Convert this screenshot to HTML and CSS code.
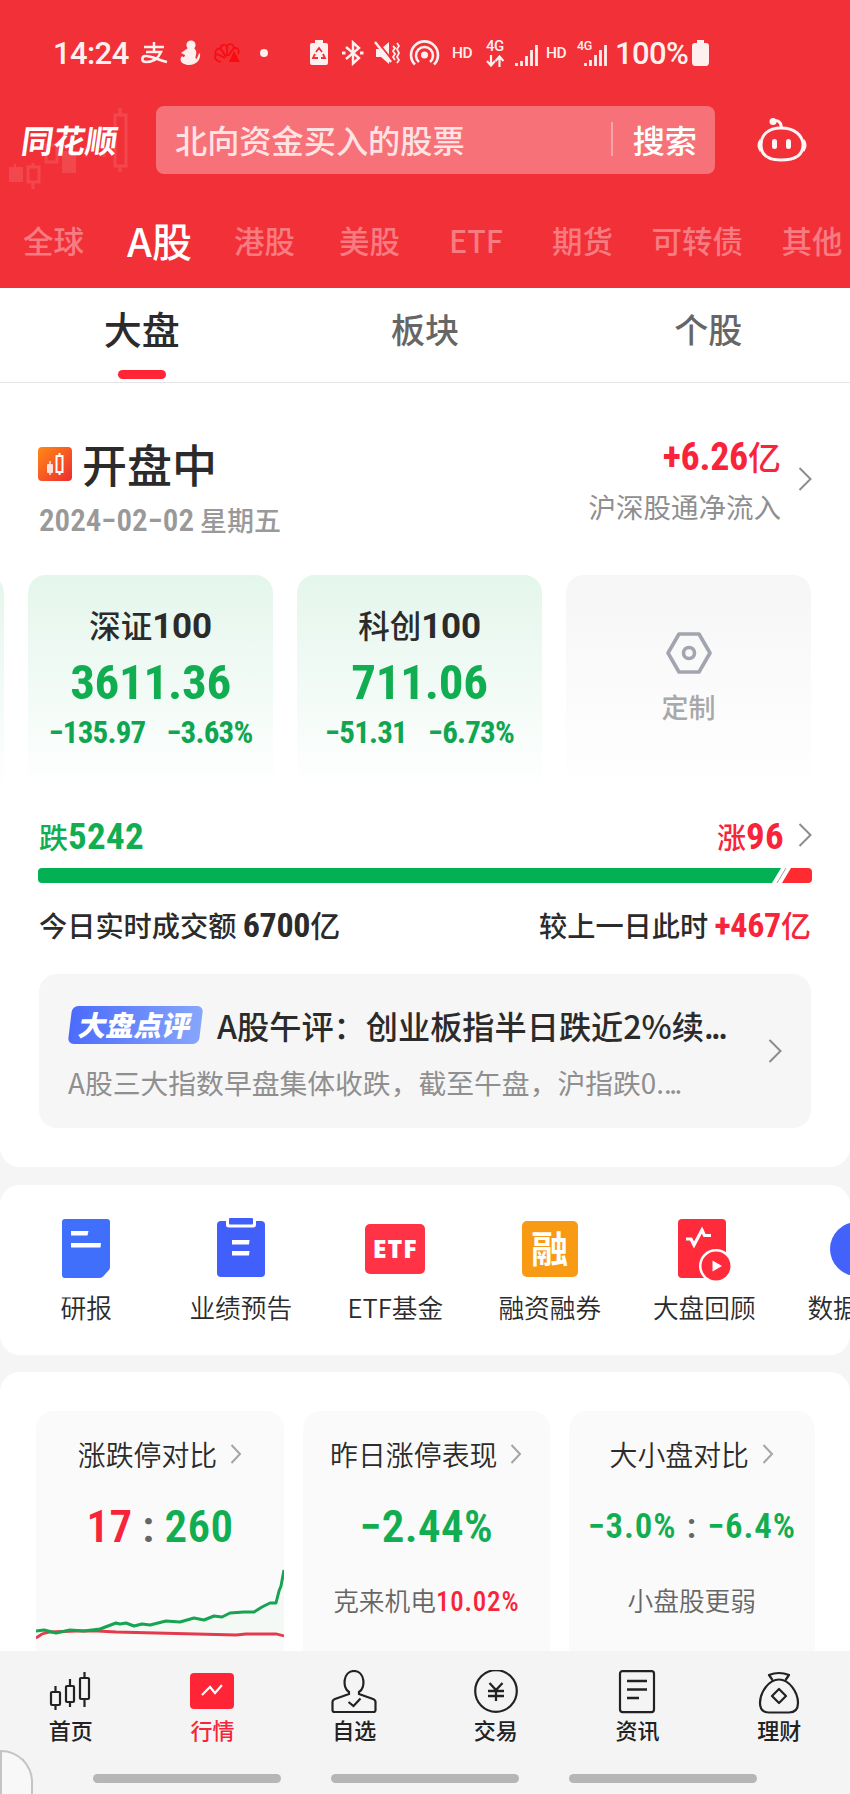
FILE: index.html
```html
<!DOCTYPE html>
<html lang="zh-CN">
<head>
    <meta charset="UTF-8">
    <meta name="viewport" content="width=device-width, initial-scale=1.0">
    <title>同花顺 - A股行情</title>
    <link rel="stylesheet" href="styles.css">
</head>
<body>

    <header class="header">
        <!-- Phone status bar -->
        <div class="status-bar">
            <span class="time">14:24</span>
            <svg class="pay" width="29" height="24" viewBox="0 0 29 24"><path d="M4 6 H24 M14 1 V11 M6 11 H21 C18 18 12 21 6 21 C1 21 1 15 6 15 C12 15 18 19 27 21" fill="none" stroke="#fff0f0" stroke-width="2.500"/></svg>
            <svg class="s-person" width="22" height="26" viewBox="0 0 22 26"><circle cx="12" cy="5" r="4.6" fill="#fff0f0"/><path d="M9 8 L15 8 C20 13 15 16 17 19 C19 19 18 15 21 13 C22 20 17 25 10 25 C4 25 -1 21 3 16 C4 18 6 17 6 15 L2 13 Z" fill="#fff0f0"/></svg>
            <svg class="s-shell" width="28" height="24" viewBox="0 0 28 24"><g fill="none" stroke="#fb0a10" stroke-width="1.600"><path d="M8 21 C2 20 1 16 3 14 C1 9 5 7 7 8 C8 3 12 3 14 5 C17 1 21 4 21 7 C25 6 27 10 25 13"/><path d="M12 17 L4 13 M13 16 L8 8 M14 15 L14 5 M15 15 L21 7"/></g><path d="M21 10 L27 21 L16 21 Z" fill="#fb0a10"/></svg>
            <span class="dot"></span>
            <svg class="s-saver" width="20" height="26" viewBox="0 0 20 26"><path d="M6 0 H14 V3 H17 Q19 3 19 5 V23 Q19 25 17 25 H3 Q1 25 1 23 V5 Q1 3 3 3 H6 Z" fill="#fff0f0"/><path d="M7 12 L10 8 L13 12 M14 14 L16 18 H12 M9 18 H4 L6 14" fill="none" stroke="#f13037" stroke-width="1.8"/></svg>
            <svg class="s-bt" width="24" height="26" viewBox="0 0 24 26"><path d="M5 7 L18 18 L12 23.5 V2.500 L18 8 L5 19" fill="none" stroke="#fff0f0" stroke-width="2.400"/><path d="M1 13 h3.500 M19 13 h3.500" stroke="#fff0f0" stroke-width="3"/></svg>
            <svg class="s-mute" width="26" height="26" viewBox="0 0 26 26"><path d="M2 9 H7 L15 2 V24 L7 17 H2 Z" fill="#fff0f0"/><path d="M3 1 L18 20" stroke="#f13037" stroke-width="2"/><path d="M1 2 L17 22" stroke="#fff0f0" stroke-width="2.400"/><path d="M19 6 l2 2 l-2 3 l2 3 l-2 3 l2 3 M23 3 l2 3 l-2 3 l2 4 l-2 4 l2 3 l-2 3" fill="none" stroke="#fff0f0" stroke-width="1.800"/></svg>
            <svg class="s-spot" width="31" height="26" viewBox="0 0 31 26"><circle cx="15.500" cy="15" r="3.500" fill="#fff0f0"/><path d="M10 22 A8.500 8.500 0 1 1 21 22 M6 24.500 A13.500 13.500 0 1 1 25 24.500" fill="none" stroke="#fff0f0" stroke-width="2.600"/></svg>
            <span class="hd hd-1">HD</span>
            <span class="net">
                <span>4G</span>
                <svg width="18" height="12" viewBox="0 0 18 12"><path d="M5 0 V10 M1 6 L5 10.500 L9 6 M13.500 12 V2 M9.500 6 L13.500 1.500 L17.500 6" fill="none" stroke="#fff0f0" stroke-width="2.200"/></svg>
            </span>
            <svg class="s-signal" width="23" height="23" viewBox="0 0 23 23"><path d="M1.500 19 V22 M6.500 17 V22 M11.500 12 V22 M16.500 6 V22 M21.500 1 V22" stroke="#fff0f0" stroke-width="2.800"/></svg>
            <span class="hd hd-2">HD</span>
            <span class="net-small">4G</span>
            <svg class="s-signal-2" width="23" height="23" viewBox="0 0 23 23"><path d="M1.500 19 V22 M6.500 16 V22 M11.500 11 V22 M16.500 6 V22 M21.500 1 V22" stroke="#fff0f0" stroke-width="2.800"/></svg>
            <span class="percent">100%</span>
            <svg class="s-battery" width="17" height="26" viewBox="0 0 17 26"><path d="M5 0 H12 V3 H14 Q17 3 17 6 V22 Q17 26 14 26 H3 Q0 26 0 22 V6 Q0 3 3 3 H5 Z" fill="#fff0f0"/></svg>
        </div>

        <!-- Logo, search box, assistant -->
        <div class="top-row">
            <div class="logo">
                <svg class="logo-bg" width="130" height="104" viewBox="0 0 130 104"><g fill="#f3474e"><rect x="9" y="82" width="14" height="15"/><rect x="62" y="66" width="14" height="22"/><path d="M15 79 v6" stroke="#f3474e" stroke-width="2"/></g><g fill="none" stroke="#f3474e" stroke-width="3"><rect x="28" y="82" width="11" height="15"/><path d="M33 78 v4 M33 97 v7"/><rect x="46" y="60" width="11" height="17"/><rect x="115" y="30" width="11" height="51"/><path d="M120 23 v7 M120 81 v6 M104 62 v10 M86 62 v10"/></g></svg>
                <span>同花顺</span>
            </div>
            <div class="search">
                <span class="search-text">北向资金买入的股票</span>
                <span class="search-btn">搜索</span>
            </div>
            <svg class="robot" width="50" height="46" viewBox="0 0 50 46"><g fill="none" stroke="#fff5f5" stroke-width="3"><path d="M24 11 C11 11 4 18 4 28 C4 38 10 43 24 43 C39 43 46 38 46 28 C46 18 37 11 24 11 Z"/><path d="M24 11 C25 5 20 2 16 5"/><path d="M4 23 Q0 28 4 34 M46 23 Q50 28 46 34"/></g><circle cx="16" cy="4.500" r="3.500" fill="#fff5f5"/><rect x="15" y="22" width="5" height="10" rx="2.500" fill="#fff5f5"/><rect x="29" y="22" width="5" height="10" rx="2.500" fill="#fff5f5"/></svg>
        </div>

        <nav class="market-tabs">
            <span>全球</span>
            <span class="active">A股</span>
            <span>港股</span>
            <span>美股</span>
            <span class="etf">ETF</span>
            <span>期货</span>
            <span>可转债</span>
            <span>其他</span>
        </nav>
    </header>

    <nav class="sub-tabs">
        <span class="active">大盘</span>
        <span>板块</span>
        <span>个股</span>
    </nav>

    <!-- Market overview -->
    <section class="overview">
        <div class="session">
            <div class="session-left">
                <h1>
                    <svg width="34" height="34" viewBox="0 0 34 34"><defs><linearGradient id="og" x1="0" y1="0" x2="1" y2="1"><stop offset="0" stop-color="#ff8a14"/><stop offset="1" stop-color="#ee2a33"/></linearGradient></defs><rect width="34" height="34" rx="4" fill="url(#og)"/><path d="M12 14 v14" stroke="#ffe3d8" stroke-width="1.500"/><rect x="9" y="17" width="6" height="9" rx="1" fill="#ffe3d8"/><rect x="18.500" y="9" width="6" height="16" fill="none" stroke="#fff" stroke-width="2"/><path d="M21.500 6 v3 M21.500 25 v3" stroke="#fff" stroke-width="2"/></svg>
                    开盘中
                </h1>
                <p class="date"><span class="num">2024−02−02</span> 星期五</p>
            </div>
            <div class="session-right">
                <p class="inflow"><span class="num">+6.26</span>亿</p>
                <p class="inflow-label">沪深股通净流入</p>
            </div>
            <svg class="arrow" width="14" height="24" viewBox="0 0 14 24"><path d="M1.500 1 L12.500 12 L1.500 23"/></svg>
        </div>

        <div class="indexes">
            <div class="index-card"></div>
            <div class="index-card">
                <h2>深证<b class="num">100</b></h2>
                <p class="price num">3611.36</p>
                <p class="change num"><span>−135.97</span><span>−3.63%</span></p>
            </div>
            <div class="index-card">
                <h2>科创<b class="num">100</b></h2>
                <p class="price num">711.06</p>
                <p class="change num"><span>−51.31</span><span>−6.73%</span></p>
            </div>
            <div class="index-card custom">
                <svg width="46" height="42" viewBox="0 0 46 42"><path d="M13 2 H33 L44 21 L33 40 H13 L2 21 Z" fill="none" stroke="#a2a5b0" stroke-width="3.600" stroke-linejoin="round"/><circle cx="23" cy="21" r="5.500" fill="none" stroke="#a2a5b0" stroke-width="3.600"/></svg>
                <p>定制</p>
            </div>
        </div>

        <div class="breadth">
            <span class="down">跌<b class="num">5242</b></span>
            <span class="up">涨<b class="num">96</b></span>
            <svg class="arrow" width="14" height="24" viewBox="0 0 14 24"><path d="M1.500 1 L12.500 12 L1.500 23"/></svg>
        </div>
        <svg class="ratio-bar" width="774" height="15" viewBox="0 0 774 15"><path d="M4 0 H743 L734 15 H4 Q0 15 0 11 V4 Q0 0 4 0 Z" fill="#04b054"/><path d="M748 0 L739 15" stroke="#888" stroke-width="0.800"/><path d="M753 0 H770 Q774 0 774 4 V11 Q774 15 770 15 H744 Z" fill="#ff2b30"/></svg>
        <div class="volume">
            <span>今日实时成交额 <b class="num">6700</b><em>亿</em></span>
            <span>较上一日此时 <span class="up"><b class="num">+467</b><em>亿</em></span></span>
        </div>

        <div class="news">
            <div class="news-body">
                <p class="news-title"><span class="badge"><i>大盘点评</i></span>A股午评：创业板指半日跌近2%续<span class="dots">...</span></p>
                <p class="news-text">A股三大指数早盘集体收跌，截至午盘，沪指跌0.<span class="dots">...</span></p>
            </div>
            <svg class="arrow" width="14" height="24" viewBox="0 0 14 24"><path d="M1.500 1 L12.500 12 L1.500 23"/></svg>
        </div>
    </section>

    <!-- Shortcuts -->
    <section class="shortcuts">
        <div class="shortcut">
            <svg width="60" height="64" viewBox="0 0 60 64"><path d="M9 2 H51 Q54 2 54 5 V50 Q54 52 52.500 53.500 L47 59.500 Q45.500 61 43 61 H9 Q6 61 6 58 V5 Q6 2 9 2 Z" fill="#4070fb"/><path d="M15 14 H32.500 L31.500 18.500 H15 Z M15 26 H45 L44.500 30.500 H15 Z" fill="#fff"/></svg>
            <span>研报</span>
        </div>
        <div class="shortcut">
            <svg width="60" height="64" viewBox="0 0 60 64"><rect x="6" y="4" width="48" height="56" rx="4" fill="#405ffb"/><path d="M15 3 H45 V8 Q45 10.500 42 10.500 H18 Q15 10.500 15 8 Z" fill="#fff"/><rect x="18" y="1" width="24" height="6.500" rx="1" fill="#405ffb"/><path d="M21 23 H38.500 L38 27.500 H21 Z M21 34 H38.500 L38 38.500 H21 Z" fill="#fff"/></svg>
            <span>业绩预告</span>
        </div>
        <div class="shortcut">
            <div class="icon-box"><div class="etf-icon">ETF</div></div>
            <span>ETF基金</span>
        </div>
        <div class="shortcut">
            <div class="icon-box"><div class="rong-icon">融</div></div>
            <span>融资融券</span>
        </div>
        <div class="shortcut">
            <svg width="60" height="64" viewBox="0 0 60 64"><rect x="4" y="2" width="48" height="59" rx="4" fill="#ff2a3a"/><path d="M12 22 H17 L20 28 L28 13 L30.500 18.500 H37" fill="none" stroke="#fff" stroke-width="3.200"/><circle cx="42" cy="49" r="17" fill="#fff"/><circle cx="42" cy="49" r="14.500" fill="#ff2a3a"/><path d="M38.500 43.500 L48 49 L38.500 54.500 Z" fill="#fff"/></svg>
            <span>大盘回顾</span>
        </div>
        <div class="shortcut">
            <svg width="60" height="64" viewBox="0 0 60 64"><circle cx="28" cy="32" r="27" fill="#4262fb"/></svg>
            <span>数据中心</span>
        </div>
    </section>

    <!-- Comparison cards -->
    <section class="stats">
        <div class="stat">
            <h3>涨跌停对比<svg class="arrow" width="12" height="20" viewBox="0 0 12 20"><path d="M1.500 1 L10 10 L1.500 19"/></svg></h3>
            <p class="big num"><span class="up">17</span><i class="colon">:</i><span class="down">260</span></p>
            <svg class="chart" width="248" height="84" viewBox="0 0 248 84"><path d="M0 62 L8 61 L20 64 L34 61 L60 61 L72 56 L84 55 L98 58 L120 54 L150 52 L170 50 L200 46 L214 43 L226 40 L240 32 L248 0 V66 L0 66 Z" fill="#f4f9f5"/><path d="M0 69 L6 65 L14 63 L40 62 L62 62 L80 63 L120 64 L200 66 L210 65 L240 65 L248 67" fill="none" stroke="#e33b4d" stroke-width="2.800"/><path d="M0 62 L8 61 L20 64 L34 61 L48 62 L64 60 L72 57 L80 54 L84 55 L90 54 L98 57 L106 55 L114 56 L130 52 L144 53 L158 49 L168 51 L178 47 L186 48 L194 44 L208 43 L218 43 L226 38 L234 34 L240 34 L243 22 L245 17 L248 1" fill="none" stroke="#16a352" stroke-width="3" stroke-linejoin="round"/></svg>
        </div>
        <div class="stat">
            <h3>昨日涨停表现<svg class="arrow" width="12" height="20" viewBox="0 0 12 20"><path d="M1.500 1 L10 10 L1.500 19"/></svg></h3>
            <p class="big num"><span class="down">−2.44%</span></p>
            <p class="note">克来机电<span class="num up">10.02%</span></p>
        </div>
        <div class="stat">
            <h3>大小盘对比<svg class="arrow" width="12" height="20" viewBox="0 0 12 20"><path d="M1.500 1 L10 10 L1.500 19"/></svg></h3>
            <p class="big pair num"><span class="down">−3.0%</span><i class="colon">:</i><span class="down">−6.4%</span></p>
            <p class="note">小盘股更弱</p>
        </div>
    </section>

    <!-- Bottom navigation -->
    <footer class="bottom">
        <nav class="bottom-nav">
            <a><svg width="46" height="46" viewBox="0 0 46 46"><g fill="none" stroke="#222" stroke-width="2.200"><rect x="3" y="22" width="9" height="13" rx="1"/><path d="M7.500 16 v6 M7.500 35 v5"/><rect x="18" y="16" width="8" height="16" rx="1"/><path d="M22 9 v7 M22 32 v5"/><rect x="32" y="8" width="9" height="21" rx="1"/><path d="M36.500 2 v6 M36.500 29 v8"/></g></svg>首页</a>
            <a class="active"><svg width="46" height="46" viewBox="0 0 46 46"><rect x="1" y="3" width="44" height="36" rx="4" fill="#ff2436"/><path d="M13 25 L21 17 L26 23 L33 15" fill="none" stroke="#fff" stroke-width="2.200"/></svg>行情</a>
            <a><svg width="46" height="46" viewBox="0 0 46 46"><path d="M18 22 C11 18 12 1 23 1 C34 1 35 18 28 22 V24 L42 29 Q44.500 30 44.500 32 V40 Q44.500 42 42.500 42 H3.500 Q1.500 42 1.500 40 V32 Q1.500 30 4 29 L18 24 Z M17.500 32 L22.500 36 L29.500 28.500" fill="none" stroke="#222" stroke-width="2.200"/></svg>自选</a>
            <a><svg width="46" height="46" viewBox="0 0 46 46"><path d="M16.500 13 L23 20 L29.500 13 M15 21 H31 M15 26 H31 M23 20 V31" fill="none" stroke="#222" stroke-width="2.300"/><circle cx="23" cy="21" r="20.800" fill="none" stroke="#222" stroke-width="2.200"/></svg>交易</a>
            <a><svg width="46" height="46" viewBox="0 0 46 46"><rect x="6" y="1.100" width="34" height="41" rx="2.500" fill="none" stroke="#222" stroke-width="2.200"/><path d="M13 11 H33 M13 19.500 H33 M13 28 H25" stroke="#222" stroke-width="2.300"/></svg>资讯</a>
            <a><svg width="46" height="46" viewBox="0 0 46 46"><path d="M16.500 10 L13 5 Q23 1 33 5 L29.500 10 M23 9.500 C13 9.500 4 22 4 33 C4 39 7 42.500 13 42.500 H33 C39 42.500 42 39 42 33 C42 22 33 9.500 23 9.500 Z M23 19 L30 26 L23 33 L16 26 Z" fill="none" stroke="#222" stroke-width="2.200" stroke-linejoin="round"/></svg>理财</a>
        </nav>
        <div class="gesture">
            <span></span>
            <span></span>
            <span></span>
        </div>
        <div class="corner"></div>
    </footer>

</body>
</html>
```
FILE: styles.css
```css
* {
    margin: 0;
    padding: 0;
    box-sizing: border-box;
}

body {
    width: 850px;
    height: 1794px;
    overflow: hidden;
    display: flex;
    flex-direction: column;
    font-family: "Noto Sans CJK SC", sans-serif;
    color: #2b2b2b;
    background-color: #f5f5f5;
}

i, em {
    font-style: normal;
}

svg {
    display: block;
    flex-shrink: 0;
}

.num {
    font-family: Roboto, "Noto Sans CJK SC", sans-serif;
    font-weight: 700;
    font-stretch: 80%;
}

.up {
    color: #f8253a;
}

.down {
    color: #10ad51;
}

.arrow path {
    fill: none;
    stroke: #8c8c8c;
    stroke-width: 2;
}

/* Header */
.header {
    height: 288px;
    flex-shrink: 0;
    background-color: #f13037;
}

.status-bar {
    height: 106px;
    padding-left: 53px;
    display: flex;
    align-items: center;
    font-family: Roboto, sans-serif;
    font-weight: 500;
    color: #fff0f0;
    white-space: nowrap;
}

.time {
    width: 76px;
    font-size: 31px;
    letter-spacing: -0.6px;
}

.pay { margin-left: 11px; }
.s-person { margin-left: 10px; }
.s-shell { margin-left: 12px; }

.dot {
    width: 8px;
    height: 8px;
    margin-left: 19px;
    border-radius: 50%;
    background-color: #fff0f0;
}

.s-saver { margin-left: 41px; }
.s-bt { margin-left: 12px; }
.s-mute { margin-left: 9px; }
.s-spot { margin-left: 9px; }

.hd {
    width: 21px;
    font-size: 15.500px;
    letter-spacing: -0.5px;
}

.hd-1 { margin-left: 12px; }
.hd-2 { margin-left: 8px; }

.net {
    width: 19px;
    margin-left: 13px;
    font-size: 15px;
    line-height: 13px;
    letter-spacing: -0.5px;
}

.net svg {
    margin-top: 2px;
}

.s-signal { margin-left: 10px; margin-top: 4px; }

.net-small {
    width: 14px;
    margin: -16px 0 0 10px;
    font-size: 12.500px;
    letter-spacing: -0.3px;
}

.s-signal-2 { margin-left: -7px; margin-top: 4px; }

.percent {
    width: 74px;
    margin-left: 8px;
    font-size: 31px;
    letter-spacing: -0.6px;
}

.s-battery { margin-left: 3px; }

.top-row {
    height: 68px;
    display: flex;
    align-items: center;
}

.logo {
    position: relative;
    width: 156px;
    padding: 0 0 3px 22px;
    font-size: 32px;
    line-height: 48px;
    font-weight: 700;
    color: #fff;
}

.logo span {
    position: relative;
    display: inline-block;
    transform: skewX(-8deg);
}

.logo-bg {
    position: absolute;
    left: 0;
    top: -30px;
}

.search {
    width: 559px;
    height: 68px;
    padding: 0 18px 2px 19px;
    display: flex;
    justify-content: space-between;
    align-items: center;
    border-radius: 8px;
    font-size: 32.200px;
    line-height: 40px;
    background-color: #f67178;
}

.search-text {
    font-weight: 500;
    color: #ffe3e4;
}

.search-btn {
    padding-left: 20px;
    line-height: 34px;
    border-left: 2px solid #f9a5a9;
    font-weight: 500;
    color: #fff;
}

.robot {
    margin-left: 42px;
}

.market-tabs {
    height: 114px;
    padding: 17px 0 0 23px;
    display: flex;
    align-items: center;
    gap: 44px;
    font-size: 30.500px;
    font-weight: 500;
    color: #f77b81;
    white-space: nowrap;
}

.market-tabs span:nth-child(n+6) {
    margin-right: -5.500px;
}

.market-tabs .etf {
    padding: 0 5px;
}

.market-tabs .active {
    margin: 0 -2px 0 -1px;
    font-size: 40px;
    color: #fff;
}

/* Second level tabs */
.sub-tabs {
    height: 95px;
    flex-shrink: 0;
    display: grid;
    grid-template-columns: repeat(3, 1fr);
    border-bottom: 1px solid #e6e6e6;
    background-color: #fff;
}

.sub-tabs span {
    padding-top: 16px;
    font-size: 34px;
    line-height: 50px;
    font-weight: 500;
    text-align: center;
    color: #666;
}

.sub-tabs .active {
    font-size: 38px;
    line-height: 48px;
    color: #2b2b2b;
}

.sub-tabs .active::after {
    content: '';
    display: block;
    width: 48px;
    height: 9px;
    margin: 18px auto 0;
    border-radius: 5px;
    background-color: #ff2436;
}

/* Overview */
.overview {
    height: 784px;
    flex-shrink: 0;
    padding: 52px 38px 0;
    border-radius: 0 0 20px 20px;
    background-color: #fff;
}

.session {
    height: 140px;
    display: flex;
}

.session h1 {
    display: flex;
    align-items: center;
    gap: 10px;
    font-size: 45px;
    line-height: 58px;
    font-weight: 500;
}

.date {
    margin: 7px 0 0 1px;
    font-size: 27px;
    line-height: 40px;
    font-weight: 500;
    color: #999;
}

.date .num {
    font-size: 31px;
    font-weight: 600;
}

.session-right {
    margin-left: auto;
    text-align: right;
}

.inflow {
    margin-top: -1px;
    font-size: 33px;
    line-height: 44px;
    font-weight: 500;
    color: #f8253a;
}

.inflow .num {
    font-size: 38px;
    letter-spacing: -0.3px;
}

.inflow-label {
    margin-top: 7px;
    font-size: 27.500px;
    line-height: 40px;
    color: #8f8f8f;
}

.session .arrow {
    margin: 32px 0 0 17px;
}

.indexes {
    display: flex;
    gap: 24px;
    margin-left: -279px;
    width: 1052px;
}

.index-card {
    width: 245px;
    height: 217px;
    flex-shrink: 0;
    padding-top: 26px;
    border-radius: 18px;
    text-align: center;
    background: linear-gradient(#e4f6ec, #fff);
}

.index-card h2 {
    font-size: 31.500px;
    line-height: 46px;
    font-weight: 500;
}

.index-card h2 .num {
    font-size: 35px;
    font-stretch: 100%;
    letter-spacing: -0.3px;
}

.price {
    margin-top: 4px;
    font-size: 49px;
    line-height: 58px;
    letter-spacing: -0.3px;
    color: #10ad51;
}

.change {
    display: flex;
    justify-content: center;
    gap: 21px;
    font-size: 31px;
    line-height: 41px;
    letter-spacing: -0.8px;
    color: #10a651;
}

.custom {
    padding-top: 57px;
    font-size: 27px;
    line-height: 40px;
    font-weight: 500;
    color: #a8a8a8;
    background: linear-gradient(#f6f6f6, #fff);
}

.custom svg {
    margin: 0 auto 13px;
}

.breadth {
    height: 50px;
    margin-top: 19px;
    padding-left: 1px;
    display: flex;
    align-items: center;
    font-size: 29px;
    line-height: 50px;
    font-weight: 500;
}

.breadth .num {
    font-size: 37px;
    letter-spacing: 0.3px;
}

.breadth .up {
    margin-left: auto;
}

.breadth .arrow {
    margin: -2px 0 0 14px;
}

.ratio-bar {
    margin-top: 7px;
}

.volume {
    height: 50px;
    margin-top: 16px;
    padding: 0 1px;
    display: flex;
    justify-content: space-between;
    font-size: 28.200px;
    line-height: 50px;
    font-weight: 500;
}

.volume .num {
    font-size: 34px;
    letter-spacing: -0.3px;
}

.volume em {
    font-size: 30px;
}

.news {
    height: 154px;
    margin: 25px 1px 0;
    padding: 0 29px;
    display: flex;
    justify-content: space-between;
    align-items: center;
    border-radius: 18px;
    white-space: nowrap;
    background-color: #f6f6f6;
}

.news-title {
    display: flex;
    align-items: center;
    font-size: 32.200px;
    line-height: 48px;
    font-weight: 500;
}

.badge {
    width: 131px;
    height: 38px;
    margin: 1px 16px 0 2px;
    border-radius: 6px;
    line-height: 36px;
    text-align: center;
    color: #fff;
    background: linear-gradient(90deg, #4b6bfb, #86a6fc);
    transform: skewX(-7deg);
}

.badge i {
    display: block;
    font-size: 28px;
    font-weight: 900;
    transform: skewX(-5deg);
}

.dots {
    letter-spacing: -2.500px;
}

.news-text {
    margin-top: 13px;
    font-size: 27.800px;
    line-height: 40px;
    color: #8f8f8f;
}

/* Shortcuts */
.shortcuts {
    height: 170px;
    flex-shrink: 0;
    margin-top: 18px;
    padding: 32px 0 0 9px;
    display: flex;
    overflow: hidden;
    border-radius: 20px;
    background-color: #fff;
}

.shortcut {
    width: 154.500px;
    flex-shrink: 0;
    display: flex;
    flex-direction: column;
    align-items: center;
    font-size: 25.700px;
    line-height: 36px;
    font-weight: 350;
}

.shortcut span {
    margin-top: 8px;
}

.icon-box {
    height: 64px;
    display: flex;
    align-items: center;
}

.etf-icon {
    width: 60px;
    height: 50px;
    border-radius: 5px;
    font-family: "Open Sans", sans-serif;
    font-size: 25px;
    line-height: 49px;
    font-weight: 800;
    letter-spacing: 1px;
    text-align: center;
    color: #fff;
    background-color: #ff3246;
}

.rong-icon {
    width: 56px;
    height: 56px;
    border-radius: 5px;
    font-size: 37px;
    line-height: 52px;
    font-weight: 700;
    text-align: center;
    color: #fff;
    background-color: #f99a14;
}

/* Comparison cards */
.stats {
    height: 279px;
    flex-shrink: 0;
    margin-top: 17px;
    padding: 39px 35px 0 36px;
    display: flex;
    gap: 19px;
    overflow: hidden;
    border-radius: 20px 20px 0 0;
    background-color: #fff;
}

.stat {
    flex: 1;
    height: 260px;
    padding-top: 22px;
    border-radius: 18px;
    background-color: #fafafa;
    text-align: center;
}

.stat h3 {
    display: flex;
    justify-content: center;
    align-items: center;
    gap: 13px;
    font-size: 27.900px;
    line-height: 42px;
    font-weight: 350;
}

.stat h3 .arrow path {
    stroke: #a5a5a5;
}

.big {
    display: flex;
    justify-content: center;
    margin-top: 23px;
    font-size: 45px;
    line-height: 58px;
    font-weight: 600;
    letter-spacing: 0.4px;
}

.big .colon {
    width: 32px;
    color: #666;
}

.pair {
    font-size: 35px;
    letter-spacing: 0.8px;
}

.pair .colon {
    width: 31px;
}

.note {
    margin-top: 23px;
    font-size: 25.700px;
    line-height: 42px;
    font-weight: 350;
    color: #666;
}

.note .num {
    font-size: 27px;
    font-weight: 500;
    letter-spacing: 0.8px;
}

.chart {
    margin-top: 13px;
}

/* Bottom bar */
.bottom {
    position: relative;
    height: 143px;
    flex-shrink: 0;
    background-color: #f4f4f4;
}

.bottom-nav {
    height: 123px;
    padding-top: 19px;
    display: grid;
    grid-template-columns: repeat(6, 1fr);
}

.bottom-nav a {
    display: flex;
    flex-direction: column;
    align-items: center;
    font-size: 22px;
    line-height: 27px;
    font-weight: 500;
    color: #222;
}

.bottom-nav .active {
    color: #f8253a;
}

.gesture {
    padding-left: 93px;
    display: flex;
    gap: 50px;
}

.gesture span {
    width: 188px;
    height: 9px;
    border-radius: 5px;
    background-color: #b6b6b6;
}

/* Edge of the floating side button */
.corner {
    position: absolute;
    left: 0;
    bottom: 0;
    width: 33px;
    height: 44px;
    border: 2px solid #c4c4c4;
    border-bottom: none;
    border-radius: 0 32px 0 0;
    background-color: #f8f8f8;
}
```
